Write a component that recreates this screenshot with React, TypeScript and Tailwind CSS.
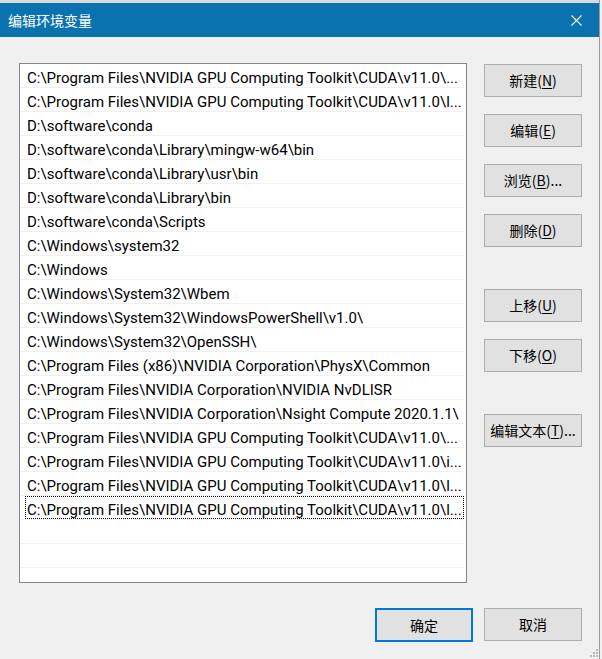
import React from "react";

const rows: string[] = [
  "C:\\Program Files\\NVIDIA GPU Computing Toolkit\\CUDA\\v11.0\\...",
  "C:\\Program Files\\NVIDIA GPU Computing Toolkit\\CUDA\\v11.0\\l...",
  "D:\\software\\conda",
  "D:\\software\\conda\\Library\\mingw-w64\\bin",
  "D:\\software\\conda\\Library\\usr\\bin",
  "D:\\software\\conda\\Library\\bin",
  "D:\\software\\conda\\Scripts",
  "C:\\Windows\\system32",
  "C:\\Windows",
  "C:\\Windows\\System32\\Wbem",
  "C:\\Windows\\System32\\WindowsPowerShell\\v1.0\\",
  "C:\\Windows\\System32\\OpenSSH\\",
  "C:\\Program Files (x86)\\NVIDIA Corporation\\PhysX\\Common",
  "C:\\Program Files\\NVIDIA Corporation\\NVIDIA NvDLISR",
  "C:\\Program Files\\NVIDIA Corporation\\Nsight Compute 2020.1.1\\",
  "C:\\Program Files\\NVIDIA GPU Computing Toolkit\\CUDA\\v11.0\\...",
  "C:\\Program Files\\NVIDIA GPU Computing Toolkit\\CUDA\\v11.0\\i...",
  "C:\\Program Files\\NVIDIA GPU Computing Toolkit\\CUDA\\v11.0\\l...",
  "C:\\Program Files\\NVIDIA GPU Computing Toolkit\\CUDA\\v11.0\\l...",
  "",
  "",
  "",
];

function Btn({ label, k, suffix = "", primary = false }: { label: string; k?: string; suffix?: string; primary?: boolean }) {
  return (
    <button
      className={
        primary
          ? "w-[98px] h-[34px] bg-[#e1e1e1] border-2 border-[#0078d7] flex items-center justify-center text-[14px] text-black font-['Noto_Sans_CJK_SC',sans-serif]"
          : "w-[98px] h-[33px] bg-[#e1e1e1] border border-[#adadad] flex items-center justify-center text-[14px] text-black font-['Noto_Sans_CJK_SC',sans-serif]"
      }
    >
      <span>
        {label}
        {k ? (
          <>
            (<span className="underline underline-offset-2">{k}</span>)
          </>
        ) : null}
        {suffix}
      </span>
    </button>
  );
}

export default function App() {
  return (
    <div className="w-[602px] h-[659px] bg-[#f0f0f0] flex relative overflow-hidden">
      <div className="w-[600px] h-full border-r border-[#9a9a9a] flex flex-col">
        <div className="h-[3px] bg-[#dadada]" />
        <div className="h-[34px] bg-[#0b72b0] flex items-center justify-between pl-[8px] pr-[17px]">
          <span className="text-white text-[14px] font-['Noto_Sans_CJK_SC',sans-serif] leading-none">编辑环境变量</span>
          <svg width="11" height="11" viewBox="0 0 11 11">
            <path d="M0.5 0.5 L10.5 10.5 M10.5 0.5 L0.5 10.5" stroke="white" strokeWidth="1.1" />
          </svg>
        </div>
        <div className="flex pt-[26px] pl-[19px] gap-[17px]">
          <div className="w-[448px] h-[520px] border border-[#828790] bg-white overflow-hidden">
            <div className="w-[444px]">
              {rows.map((r, i) => (
                <div key={i} className="h-[24px] border-b border-[#f0f0f0] flex items-stretch">
                  <div
                    className={
                      i === 18
                        ? "ml-[5px] flex-1 flex items-center pt-[5px] pl-[1px] border border-dotted border-black whitespace-nowrap overflow-hidden text-[15px] text-black font-['Roboto',sans-serif]"
                        : "ml-[5px] flex-1 flex items-center pt-[6px] pl-[2px] whitespace-nowrap overflow-hidden text-[15px] text-black font-['Roboto',sans-serif]"
                    }
                  >
                    {r}
                  </div>
                </div>
              ))}
            </div>
          </div>
          <div className="flex flex-col pt-[1px]">
            <div className="flex flex-col gap-[17px]">
              <Btn label="新建" k="N" />
              <Btn label="编辑" k="E" />
              <Btn label="浏览" k="B" suffix="..." />
              <Btn label="删除" k="D" />
            </div>
            <div className="flex flex-col gap-[17px] mt-[42px]">
              <Btn label="上移" k="U" />
              <Btn label="下移" k="O" />
            </div>
            <div className="mt-[42px]">
              <Btn label="编辑文本" k="T" suffix="..." />
            </div>
          </div>
        </div>
        <div className="flex justify-end gap-[11px] pr-[17px] mt-[25px]">
          <Btn label="确定" primary />
          <Btn label="取消" />
        </div>
      </div>
      <svg className="absolute right-[4px] bottom-[2px]" width="8" height="8" viewBox="0 0 8 8">
        <rect x="6" y="0" width="2" height="2" fill="#b8b8b8" />
        <rect x="3" y="3" width="2" height="2" fill="#b8b8b8" />
        <rect x="6" y="3" width="2" height="2" fill="#b8b8b8" />
        <rect x="0" y="6" width="2" height="2" fill="#b8b8b8" />
        <rect x="3" y="6" width="2" height="2" fill="#b8b8b8" />
        <rect x="6" y="6" width="2" height="2" fill="#b8b8b8" />
      </svg>
    </div>
  );
}
